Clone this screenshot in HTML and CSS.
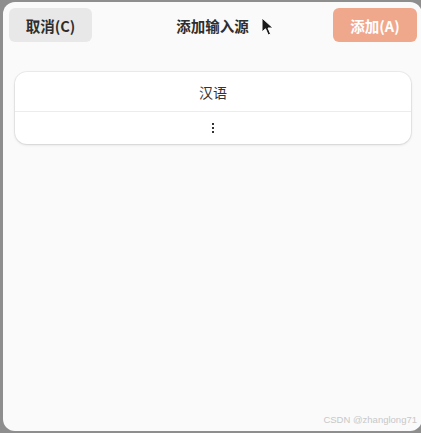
FILE: index.html
```html
<!DOCTYPE html>
<html lang="zh">
<head>
<meta charset="utf-8">
<link rel="stylesheet" href="styles.css">
</head>
<body>
<div class="window">
  <header class="header">
    <button class="btn btn-cancel">取消(C)</button>
    <div class="title">添加输入源</div>
    <button class="btn btn-add">添加(A)</button>
  </header>
  <div class="card">
    <div class="row row-lang">汉语</div>
    <div class="row row-more"><span class="dots"><i></i><i></i><i></i></span></div>
  </div>
  <div class="watermark">CSDN @zhanglong71</div>
  <svg class="cursor" width="14" height="20" viewBox="0 0 14 20">
    <path d="M1 1 L1 15 L4.5 11.8 L7.2 18 L9.6 17 L7 11 L12 11 Z" fill="#1a1a1a" stroke="#fff" stroke-width="1"/>
  </svg>
</div>
</body>
</html>
```

FILE: styles.css
```css
html, body {
  margin: 0;
  padding: 0;
}
body {
  background: #8e8e8e;
  width: 421px;
  height: 433px;
  overflow: hidden;
  font-family: "Noto Sans CJK SC", "Noto Sans", sans-serif;
}
.window {
  position: relative;
  box-sizing: border-box;
  margin: 2px 0 0 3px;
  width: 419px;
  height: 429px;
  background: #fafafa;
  border-radius: 12px;
  display: flex;
  flex-direction: column;
}
.header {
  display: flex;
  align-items: center;
  justify-content: space-between;
  padding: 6px 5px 0 6px;
  height: 34px;
}
.btn {
  border: none;
  height: 34px;
  border-radius: 6px;
  font-family: "Noto Sans CJK SC", "Noto Sans", sans-serif;
  font-size: 14.5px;
  font-weight: 700;
  padding: 0;
}
.btn-cancel {
  width: 83px;
  background: #e8e8e8;
  color: #2e2e2e;
}
.btn-add {
  width: 84px;
  background: #f0a88c;
  color: #ffffff;
}
.title {
  font-size: 14.5px;
  font-weight: 700;
  color: #2e2e2e;
}
.card {
  margin: 30px 11px 0 12px;
  background: #ffffff;
  border-radius: 12px;
  box-shadow: 0 0 0 1px rgba(0,0,0,0.05), 0 1px 3px rgba(0,0,0,0.12);
  display: flex;
  flex-direction: column;
}
.row {
  display: flex;
  align-items: center;
  justify-content: center;
}
.row-lang {
  height: 39px;
  font-size: 14px;
  color: #333;
  border-bottom: 1px solid #ececec;
}
.row-more {
  height: 32px;
}
.dots {
  display: flex;
  flex-direction: column;
  gap: 2px;
}
.dots i {
  display: block;
  width: 2px;
  height: 2px;
  background: #333;
}
.watermark {
  margin-top: auto;
  align-self: flex-end;
  margin-right: 5px;
  margin-bottom: 6px;
  font-family: "Liberation Sans", sans-serif;
  font-size: 9.5px;
  color: #c8c8c8;
}
.cursor {
  position: absolute;
  left: 258px;
  top: 15px;
}
```
